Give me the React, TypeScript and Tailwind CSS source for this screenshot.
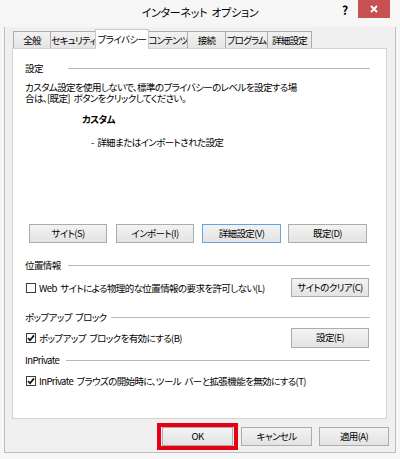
import React from "react";

const tabs = [
    { label: "全般", w: "w-[38px]" },
    { label: "セキュリティ", w: "w-[47px]" },
    { label: "プライバシー", w: "w-[54px]", active: true },
    { label: "コンテンツ", w: "w-[40px]" },
    { label: "接続", w: "w-[39px]" },
    { label: "プログラム", w: "w-[43px]" },
    { label: "詳細設定", w: "w-[45px]" },
];

function Btn({
    label,
    w = "w-[78px]",
    focus = false,
    className = "",
}: {
    label: string;
    w?: string;
    focus?: boolean;
    className?: string;
}) {
    return (
        <button
            className={`flex h-[19px] shrink-0 ${w} items-center justify-center whitespace-nowrap border ${
                focus ? "border-[#62a3e0]" : "border-[#acacac]"
            } bg-linear-to-b from-[#f3f3f3] to-[#e3e3e3] leading-none text-black ${className}`}
        >
            {label}
        </button>
    );
}

function Heading({ title, gap }: { title: string; gap: string }) {
    return (
        <div className="flex h-[12px] items-center">
            <span className="whitespace-nowrap leading-[12px]">{title}</span>
            <div className={`${gap} mt-px h-px flex-1 bg-[#b9b9b9]`} />
        </div>
    );
}

function Check({ checked }: { checked?: boolean }) {
    return (
        <span className="ml-px flex h-[10px] w-[10px] shrink-0 items-center justify-center border border-[#3c3c3c] bg-white">
            {checked && (
                <svg width="8" height="8" viewBox="0 0 8 8">
                    <path
                        d="M1 4.2 L3.1 6.3 L7 1.4"
                        fill="none"
                        stroke="#111"
                        strokeWidth="1.7"
                    />
                </svg>
            )}
        </span>
    );
}

export default function App() {
    return (
        <div className="h-[459px] w-[400px] overflow-hidden bg-[#f6f6f6] font-['Noto_Sans_CJK_JP',sans-serif] text-[9.5px] tracking-[-0.6px] text-black [font-feature-settings:'palt'] [word-spacing:2px]">

            {/* title bar */}
            <div className="relative flex h-[27px] items-start">
                <div className="flex h-[24px] w-full items-center justify-center text-[11px] tracking-[-0.3px]">
                    インターネット オプション
                </div>
                <span className="absolute left-[342px] top-[3px] text-[12px] font-bold leading-[14px]">?</span>
                <div className="absolute left-[358px] top-0 flex h-[18px] w-[32px] items-center justify-center bg-[#c75050]">
                    <svg width="8" height="8" viewBox="0 0 8 8">
                        <path d="M1 1 L7 7 M7 1 L1 7" stroke="#fff" strokeWidth="1.8" />
                    </svg>
                </div>
            </div>

            {/* client */}
            <div className="ml-[4px] flex h-[426px] w-[392px] flex-col border-x border-b border-[#bdbdbd] bg-[#f0f0f0] pl-[7px] pr-[6px] pt-[3px]">

                {/* tabs */}
                <div className="flex h-[18px] items-end pl-px">
                    {tabs.map((t) =>
                        t.active ? (
                            <div
                                key={t.label}
                                className={`relative z-10 -mb-px -ml-[2px] flex h-[20px] ${t.w} items-center justify-center whitespace-nowrap border-x border-t border-[#c8c8c8] bg-white pb-px`}
                            >
                                {t.label}
                            </div>
                        ) : (
                            <div
                                key={t.label}
                                className={`-ml-px flex h-[17px] ${t.w} items-center justify-center whitespace-nowrap border-x border-t border-[#acacac] bg-linear-to-b from-[#f2f2f2] to-[#e5e5e5] tracking-[-0.8px] first:ml-0`}
                            >
                                {t.label}
                            </div>
                        )
                    )}
                </div>

                {/* panel */}
                <div className="flex h-[371px] w-[375px] flex-col border border-[#d4d4d4] bg-white pl-[12px] pr-[16px] pt-[13px]">

                    <Heading title="設定" gap="ml-[25px]" />

                    <div className="mt-[8px] h-[11px] leading-[11px]">
                        カスタム設定を使用しないで、標準のプライバシーのレベルを設定する場
                    </div>
                    <div className="h-[11px] leading-[11px]">合は、[既定] ボタンをクリックしてください。</div>

                    <div className="ml-[57px] mt-[9px] font-bold leading-[12px]">カスタム</div>

                    <div className="ml-[66px] mt-[11px] leading-[12px]">- 詳細またはインポートされた設定</div>

                    <div className="mt-[76px] flex">
                        <Btn label="サイト(S)" className="ml-[4px]" />
                        <Btn label="インポート(I)" className="ml-[9px]" />
                        <Btn label="詳細設定(V)" className="ml-[8px]" w="w-[79px]" focus />
                        <Btn label="既定(D)" className="ml-[7px]" w="w-[79px]" />
                    </div>

                    <div className="mt-[16px]">
                        <Heading title="位置情報" gap="ml-[7px]" />
                    </div>

                    <div className="mt-[7px] flex h-[19px] items-center">
                        <Check />
                        <span className="ml-[3px] flex-1 whitespace-nowrap leading-[12px]">
                            Web サイトによる物理的な位置情報の要求を許可しない(L)
                        </span>
                        <Btn label="サイトのクリア(C)" className="mr-px" />
                    </div>

                    <div className="mt-[14px]">
                        <Heading title="ポップアップ ブロック" gap="ml-[4px]" />
                    </div>

                    <div className="mt-[5px] flex h-[20px] items-center">
                        <Check checked />
                        <span className="ml-[3px] flex-1 whitespace-nowrap leading-[12px]">ポップアップ ブロックを有効にする(B)</span>
                        <Btn label="設定(E)" className="mr-px h-[20px]" />
                    </div>

                    <div className="mt-[6px]">
                        <Heading title="InPrivate" gap="ml-[7px]" />
                    </div>

                    <div className="mt-[9px] flex h-[12px] items-center">
                        <Check checked />
                        <span className="ml-[3px] whitespace-nowrap leading-[12px]">
                            InPrivate ブラウズの開始時に、ツール バーと拡張機能を無効にする(T)
                        </span>
                    </div>
                </div>

                {/* dialog buttons */}
                <div className="mt-[8px] flex justify-end">
                    <div className="relative">
                        <Btn label="OK" w="w-[71px]" />
                        <div className="absolute -inset-x-[5px] -inset-y-[4px] border-[4px] border-[#e60012]" />
                    </div>
                    <Btn label="キャンセル" w="w-[71px]" className="ml-[8px]" />
                    <Btn label="適用(A)" w="w-[70px]" className="ml-[7px]" />
                </div>
            </div>
        </div>
    );
}
